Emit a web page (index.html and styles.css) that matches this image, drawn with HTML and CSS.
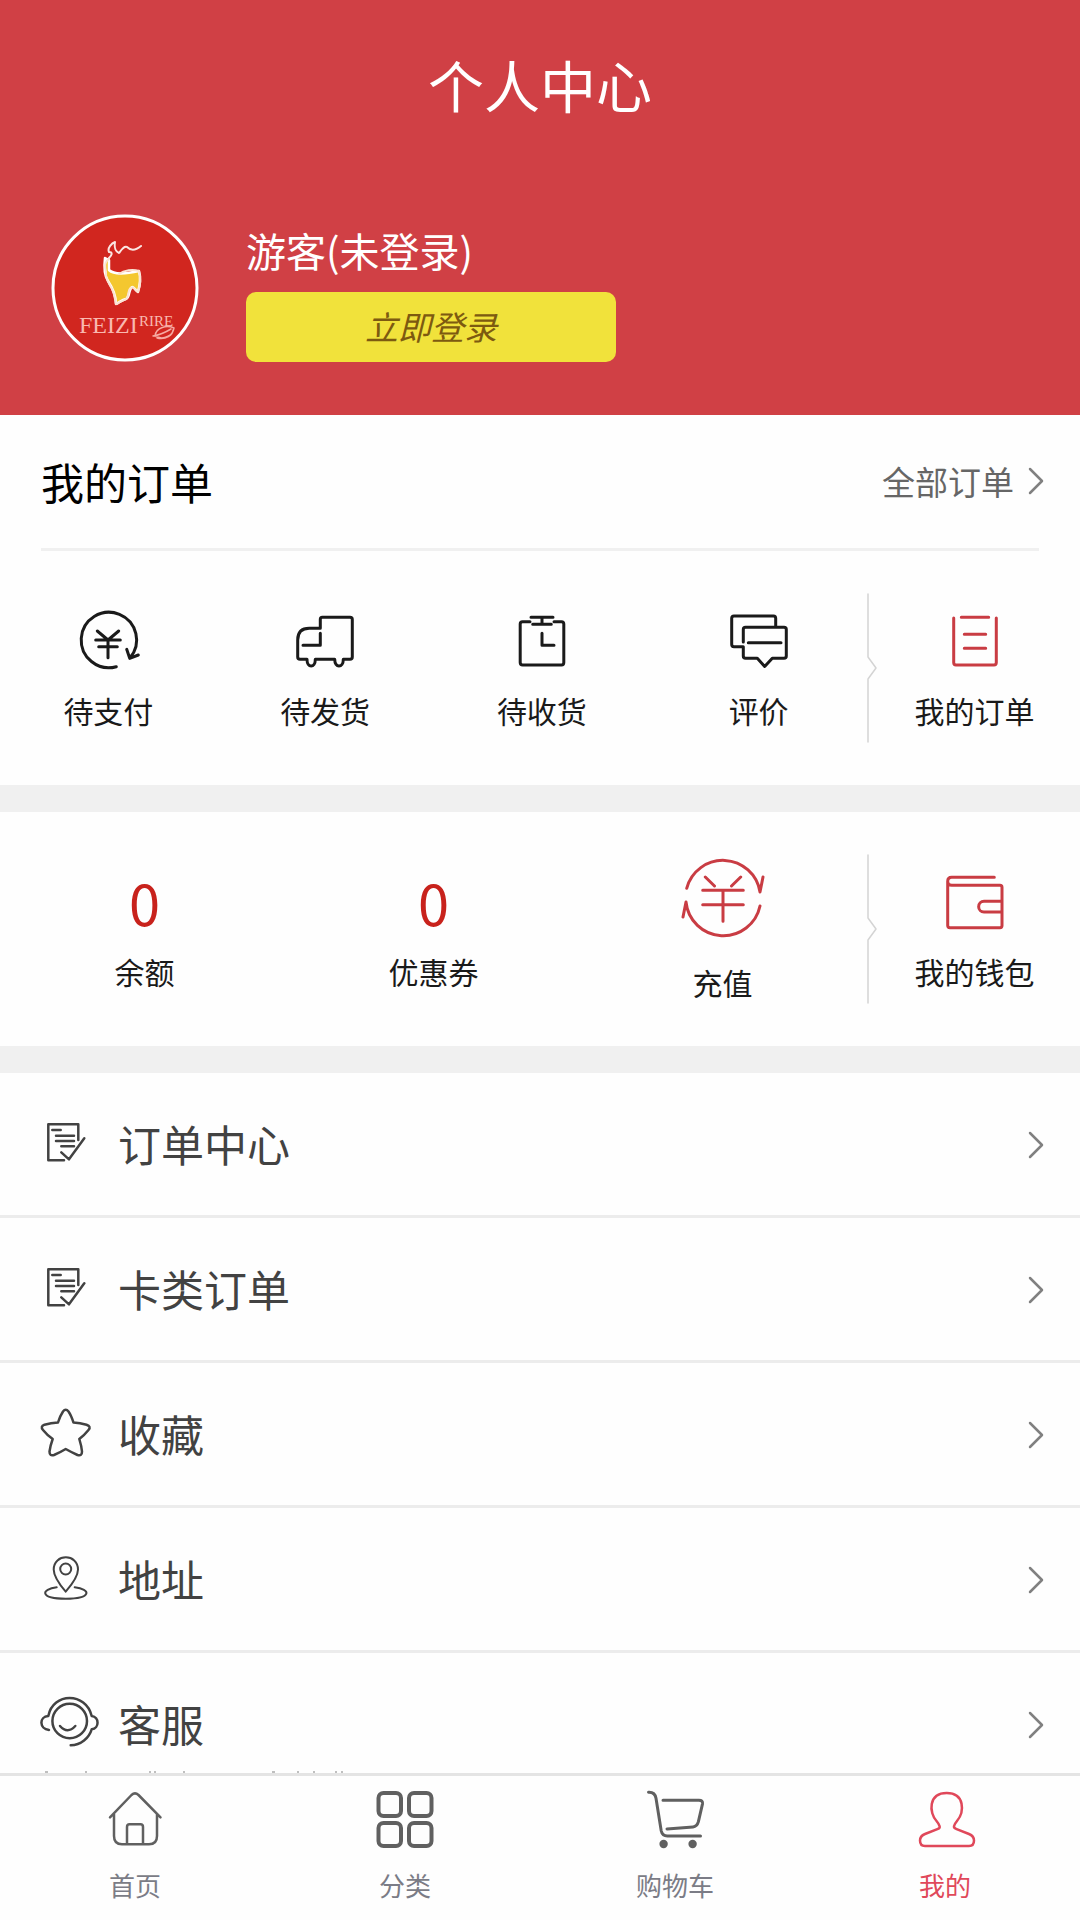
FILE: index.html
```html
<!DOCTYPE html>
<html lang="zh-CN">
<head>
<meta charset="utf-8">
<meta name="viewport" content="width=device-width, initial-scale=1">
<title>个人中心</title>
<link rel="stylesheet" href="styles.css">
</head>
<body>
<main class="content">
  <header class="hero">
    <h1 class="hero-title">个人中心</h1>
    <div class="profile">
      <svg class="avatar" viewBox="0 0 148 148" role="img" aria-label="FEIZI RIRE">
        <circle cx="74" cy="74" r="72" fill="#d1261f" stroke="#fff" stroke-width="3"/>
        <path d="M58 44C62 40 61 38 58 38C56 34 61 29 64 28C63 34 65 38 68 39C71 35 73 32 76 33C79 36 84 37 90 32" fill="none" stroke="#fbe6e2" stroke-width="2"/>
        <path d="M54 44L58 46L58 56C62 60 70 61 88 57C90 64 89 71 87 78C84 76 82 71 80 74C77 79 79 83 75 85C71 86 69 88 65 90C65 80 61 73 57 67C53 61 53 52 54 44Z" fill="#f4c72f"/>
        <path d="M58 45C53 48 54 53 55 58C54 65 58 69 61 75C64 81 64 86 65 90M66 90C70 86 74 87 76 84C78 80 77 75 80 74C83 72 84 76 87 78C90 70 90 64 88 57C82 55 73 56 68 60" fill="none" stroke="#fbe3d2" stroke-width="2"/>
        <text class="logo-large" x="28" y="119">FEIZI</text>
        <text class="logo-small" x="88" y="112">RIRE</text>
        <path d="M104 122C105 113 116 111 123 114C122 121 113 127 104 122ZM102 122C109 121 115 118 120 115M106 124C115 126 122 121 122 116" fill="none" stroke="#f6aaa2" stroke-width="1.500"/>
      </svg>
      <div class="profile-info">
        <p class="profile-name">游客(未登录)</p>
        <button class="login" type="button">立即登录</button>
      </div>
    </div>
  </header>

  <section class="panel">
    <div class="panel-head">
      <h2 class="panel-title">我的订单</h2>
      <a class="panel-more" href="#orders">全部订单
        <svg class="chevron" viewBox="0 0 16 28" aria-hidden="true"><path d="M2 2 14 14 2 26"/></svg>
      </a>
    </div>
    <div class="strip">
      <div class="strip-group">
        <a class="tile" href="#pay">
          <svg class="tile-icon" viewBox="0 0 64 64" aria-hidden="true"><path d="M40.300 57.700A27.700 27.700 0 1 1 53.700 49.300M50.700 40.300 53.700 49.300 62.300 46M21.300 22 32 31 42.700 22M19.700 31H44.300M22.700 37.700H41.300M32 31V48.700"/></svg>
          <span class="tile-label">待支付</span>
        </a>
        <a class="tile" href="#ship">
          <svg class="tile-icon" viewBox="0 0 64 64" aria-hidden="true"><path d="M14 50.300H7Q4.700 50.300 4.700 48V31Q4.700 19.300 16.300 19.300H27.300V10.300Q27.300 8.300 29.300 8.300H57Q59.300 8.300 59.300 10.500V48Q59.300 50.300 57 50.300H50.300C50.300 59.300 41.700 59.300 41.700 50.300H22.300C22.300 59.300 14 59.300 14 50.300M27.300 24.300V36.300H10"/></svg>
          <span class="tile-label">待发货</span>
        </a>
        <a class="tile" href="#receive">
          <svg class="tile-icon" viewBox="0 0 64 64" aria-hidden="true"><path d="M20 12.700H12.500Q10.200 12.700 10.200 15V53.500Q10.200 56 12.700 56H51.500Q53.800 56 53.800 53.500V15Q53.800 12.700 51.500 12.700H44M21 8.300H43M22.700 15.300H41.300M32 8.300V15.300M32 24.300V36.300H44"/></svg>
          <span class="tile-label">待收货</span>
        </a>
        <a class="tile" href="#review">
          <svg class="tile-icon" viewBox="0 0 64 64" aria-hidden="true"><path d="M48.700 17.700V9.300Q48.700 7 46.500 7H7Q4.700 7 4.700 9.300V35.300Q4.700 37.700 7 37.700H16.300V47Q16.300 49.300 18.500 49.300H30.300L37.700 57.500 45.300 49.300H57Q59.300 49.300 59.300 47V20.500Q59.300 18.300 57 18.300H18.500Q16.300 18.300 16.300 20.500V33M21.300 33.700H54"/></svg>
          <span class="tile-label">评价</span>
        </a>
      </div>
      <svg class="notch" viewBox="0 0 10 148" aria-hidden="true"><path d="M1 0V63L9 74 1 85V148"/></svg>
      <a class="tile tile-main" href="#orders">
        <svg class="tile-icon tile-icon-red" viewBox="0 0 64 64" aria-hidden="true"><path d="M10.700 9V53.500Q10.700 56 13 56H51Q53.300 56 53.300 53.500V9M18.300 8.300H45.700M21.300 25.300H42.700M21.300 39.300H42.700"/></svg>
        <span class="tile-label">我的订单</span>
      </a>
    </div>
  </section>

  <section class="panel">
    <div class="strip">
      <div class="strip-group">
        <a class="tile" href="#balance"><span class="tile-value">0</span><span class="tile-label">余额</span></a>
        <a class="tile" href="#coupons"><span class="tile-value">0</span><span class="tile-label">优惠券</span></a>
        <a class="tile tile-big" href="#recharge">
          <svg class="tile-icon tile-icon-red" viewBox="0 0 84 84" aria-hidden="true"><path d="M5.700 33.300A37.500 37.500 0 0 1 79 37L82 22M79 51A37.500 37.500 0 0 1 5 47L2 62M24.300 22 33.500 31M59.700 22 50.500 31M21.700 35.300H62.300M21.700 49.700H62.300M42 35.300V66.300"/></svg>
          <span class="tile-label">充值</span>
        </a>
      </div>
      <svg class="notch" viewBox="0 0 10 148" aria-hidden="true"><path d="M1 0V63L9 74 1 85V148"/></svg>
      <a class="tile tile-main" href="#wallet">
        <svg class="tile-icon tile-icon-red" viewBox="0 0 64 64" aria-hidden="true"><path d="M51.300 7.300H8.700Q4.700 7.300 4.700 11.300V55.500Q4.700 57.700 7 57.700H57Q59 57.700 59 55.500V17.500Q59 15.300 57 15.300H8.700Q4.700 15.300 4.700 11.300M59 31.300H41A5.300 5.300 0 0 0 41 42H59"/></svg>
        <span class="tile-label">我的钱包</span>
      </a>
    </div>
  </section>

  <nav class="menu" aria-label="功能">
    <a class="menu-row" href="#order-center">
      <svg class="menu-icon" viewBox="0 0 58 52" aria-hidden="true"><path d="M24 43.300H8.300V7.300H38.300V23M12.300 13H20.700M16 18.700H34M16 24H34M21.300 29.300H34M21.300 35.300 29 42.300 44.300 21.300"/></svg>
      <span class="menu-label">订单中心</span>
      <svg class="chevron" viewBox="0 0 16 28" aria-hidden="true"><path d="M2 2 14 14 2 26"/></svg>
    </a>
    <a class="menu-row" href="#card-orders">
      <svg class="menu-icon" viewBox="0 0 58 52" aria-hidden="true"><path d="M24 43.300H8.300V7.300H38.300V23M12.300 13H20.700M16 18.700H34M16 24H34M21.300 29.300H34M21.300 35.300 29 42.300 44.300 21.300"/></svg>
      <span class="menu-label">卡类订单</span>
      <svg class="chevron" viewBox="0 0 16 28" aria-hidden="true"><path d="M2 2 14 14 2 26"/></svg>
    </a>
    <a class="menu-row" href="#favorites">
      <svg class="menu-icon" viewBox="0 0 58 52" aria-hidden="true"><path d="M23 4.500Q25.700 1 28.500 4.500Q31 8 33.500 15.500Q40 16 46.500 17.700Q51.500 19.500 48.500 23Q44.500 28 39.300 32Q41.500 39 42 44.500Q42 49.500 37.500 48Q31 45 25.700 42Q20 45.500 14 48Q9.500 49.500 9.500 44.500Q10.500 38 12.700 32Q7 28 3 23Q0 19.500 4.500 17.700Q11 16 18 15.500Q20 9 23 4.500Z"/></svg>
      <span class="menu-label">收藏</span>
      <svg class="chevron" viewBox="0 0 16 28" aria-hidden="true"><path d="M2 2 14 14 2 26"/></svg>
    </a>
    <a class="menu-row" href="#address">
      <svg class="menu-icon" viewBox="0 0 58 52" aria-hidden="true"><path class="thin" d="M25.700 39.700C20 33 13.700 25 13.700 17.500C13.700 1.300 38 1.300 38 17.500C38 25 31.500 33 25.700 39.700ZM16.700 35.300C1 37 -1 46.700 25.700 46.700S51 37 34.700 35.300"/><circle class="thin" cx="25.700" cy="17" r="5.500"/></svg>
      <span class="menu-label">地址</span>
      <svg class="chevron" viewBox="0 0 16 28" aria-hidden="true"><path d="M2 2 14 14 2 26"/></svg>
    </a>
    <a class="menu-row" href="#service">
      <svg class="menu-icon" viewBox="0 0 58 52" aria-hidden="true"><circle cx="29.700" cy="24" r="17.300"/><path d="M9 33C-1 32 -1 19.500 8.300 19C13 -5 46 -5 51.700 19C59.500 20 59.500 31.500 51.700 32.300C49 41 41 48 30.700 48.300M20 29Q27.500 37.500 35.300 29"/></svg>
      <span class="menu-label">客服</span>
      <svg class="chevron" viewBox="0 0 16 28" aria-hidden="true"><path d="M2 2 14 14 2 26"/></svg>
    </a>
  </nav>
  <svg class="peek" viewBox="0 0 320 2" aria-hidden="true"><path d="M5 1h3M45 1h2M109 1h2M114 1h2M143 1h2M232 1h3M257 1h2M273 1h2M295 1h2M301 1h2"/></svg>
</main>

<nav class="tabs" aria-label="主导航">
  <a class="tab" href="#home">
    <svg class="tab-icon" viewBox="0 0 60 60" aria-hidden="true"><path d="M5 27.300 26.500 5Q30 1.800 33.500 5L55.500 27.300M9 24V46Q9 54.300 17 54.300H44Q52 54.300 52 46V24M22 54V37Q22 34.300 24.500 34.300H35.500Q38 34.300 38 37V54"/></svg>
    <span>首页</span>
  </a>
  <a class="tab" href="#category">
    <svg class="tab-icon" viewBox="0 0 60 60" aria-hidden="true"><g class="bold"><rect x="3.500" y="3" width="22.500" height="23" rx="5"/><rect x="34" y="3" width="22.500" height="23" rx="5"/><rect x="3.500" y="33" width="22.500" height="23" rx="5"/><rect x="34" y="33" width="22.500" height="23" rx="5"/></g></svg>
    <span>分类</span>
  </a>
  <a class="tab" href="#cart">
    <svg class="tab-icon" viewBox="0 0 60 60" aria-hidden="true"><path class="medium" d="M3.500 2.300Q10 2 11 8.300L16.200 40.700Q17.300 46 22.400 46H55.500M18 10.300H54Q58 10.300 57.500 13.800L53.400 31.700Q52 36.700 48 37L22 39"/><circle class="dot" cx="18.600" cy="54" r="4.200"/><circle class="dot" cx="47.600" cy="54" r="4.200"/></svg>
    <span>购物车</span>
  </a>
  <a class="tab tab-active" href="#me" aria-current="page">
    <svg class="tab-icon" viewBox="0 0 60 60" aria-hidden="true"><path d="M31.700 3C13 3 14 23 21.500 31Q27 37.500 23 38.800L10 44Q5 46 5 50.500Q5 56 10 56H54Q59 56 59 50.500Q59 46 54 44L41 38.800Q36.500 37.500 42 31C49.500 22 50 3 31.700 3Z"/></svg>
    <span>我的</span>
  </a>
</nav>
</body>
</html>
```

FILE: styles.css
```css
* {
  box-sizing: border-box;
}

body {
  display: flex;
  flex-direction: column;
  height: 100vh;
  margin: 0;
  background: #fefefe;
  color: #1a1a1a;
  font-family: "Noto Sans CJK SC", "Noto Sans", sans-serif;
}

h1,
h2,
p {
  margin: 0;
  font-weight: 400;
}

a {
  color: inherit;
  text-decoration: none;
}

svg {
  display: block;
  flex: none;
  overflow: visible;
  fill: none;
  stroke: currentColor;
  stroke-width: 2.5;
  stroke-linecap: round;
  stroke-linejoin: round;
}

.content {
  flex: 1;
  min-height: 0;
  overflow: hidden;
}

/* Header */
.hero {
  padding: 44px 51px 53px;
  background: #d04045;
  color: #fff;
}

.hero-title {
  font-size: 56px;
  line-height: 80px;
  text-align: center;
}

.profile {
  display: flex;
  align-items: flex-end;
  gap: 47px;
  margin-top: 90px;
}

.avatar {
  width: 148px;
  height: 148px;
}

.avatar text {
  fill: #f9b9b0;
  stroke: none;
  font-family: "Liberation Serif", serif;
}

.logo-large {
  font-size: 24px;
}

.logo-small {
  font-size: 15px;
}

.profile-info {
  flex: 1;
}

.profile-name {
  font-size: 40px;
  line-height: 56px;
}

.login {
  display: block;
  width: 100%;
  max-width: 370px;
  height: 70px;
  margin-top: 14px;
  padding: 0 0 2px;
  border: 0;
  border-radius: 10px;
  background: #f1e23b;
  color: #7d5a10;
  font-family: inherit;
  font-size: 33px;
  font-style: italic;
}

/* Order and wallet panels */
.panel {
  border-bottom: 27px solid #f0f0f0;
}

.panel-head {
  display: flex;
  justify-content: space-between;
  margin: 0 41px;
  padding: 36px 0 37px;
  border-bottom: 3px solid #f0f0f0;
  line-height: 60px;
}

.panel-title {
  color: #000;
  font-size: 43px;
}

.panel-more {
  display: flex;
  align-items: center;
  gap: 14px;
  margin-right: -5px;
  color: #666;
  font-size: 33px;
}

.chevron {
  width: 16px;
  height: 28px;
  color: #808080;
}

.strip {
  display: flex;
  padding: 43px 0;
}

.strip-group {
  display: grid;
  flex: 1;
  grid-auto-columns: 1fr;
  grid-auto-flow: column;
}

.tile {
  display: flex;
  flex-direction: column;
  align-items: center;
  gap: 17px;
  padding-top: 15px;
  font-size: 30px;
  line-height: 40px;
}

.tile-main {
  width: 203px;
  padding-right: 8px;
}

.tile-icon {
  width: 64px;
  height: 64px;
  stroke-width: 3;
}

.tile-icon-red {
  color: #c93c43;
}

.tile-big {
  gap: 23px;
  padding-top: 0;
}

.tile-big .tile-icon {
  width: 84px;
  height: 84px;
}

.tile-value {
  color: #c8221c;
  font-size: 56px;
  line-height: 64px;
}

.notch {
  width: 10px;
  height: 148px;
  color: #d4d4d4;
  stroke-width: 1.5;
}

/* Menu list */
.menu-row {
  display: flex;
  align-items: center;
  gap: 20px;
  padding: 42px 36px 44px 40px;
  border-bottom: 3px solid #ececec;
  color: #424242;
  font-size: 43px;
  line-height: 56px;
}

.menu-row:last-child {
  padding-bottom: 20px;
  border-bottom: 0;
}

.menu-row .chevron {
  margin-top: 4px;
}

.menu-label {
  flex: 1;
}

.menu-icon {
  width: 58px;
  height: 52px;
}

.thin {
  stroke-width: 2;
}

.peek {
  width: 320px;
  height: 2px;
  margin-left: 40px;
  color: #808080;
  stroke-width: 1;
  stroke-linecap: butt;
}

/* Bottom tab bar */
.tabs {
  display: grid;
  grid-template-columns: repeat(4, 1fr);
  padding: 14px 0 17px;
  border-top: 3px solid #e4e4e4;
}

.tab {
  display: flex;
  flex-direction: column;
  align-items: center;
  gap: 17px;
  color: #7b7c86;
  font-size: 26px;
  line-height: 36px;
}

.tab-icon {
  width: 60px;
  height: 60px;
  color: #606060;
}

.medium {
  stroke-width: 3;
}

.bold {
  stroke-width: 4;
}

.dot {
  fill: currentColor;
  stroke: none;
}

.tab-active,
.tab-active .tab-icon {
  color: #e0485a;
}
```
